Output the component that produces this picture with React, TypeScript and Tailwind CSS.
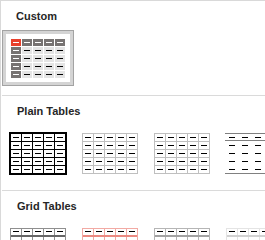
import React from "react";

const cols = [0, 1, 2, 3, 4];

function Dash({ light }: { light?: boolean }) {
  return <div className={light ? "w-[6px] h-px bg-white" : "w-[6px] h-px bg-black"} />;
}

function GridThumb({ line, thick }: { line: string; thick?: boolean }) {
  return (
    <div
      className={
        thick
          ? `flex flex-col gap-px p-[2px] w-[58px] h-[43px] ${line}`
          : `flex flex-col gap-px p-px w-[56px] h-[41px] ${line}`
      }
    >
      {cols.map((r) => (
        <div key={r} className="flex gap-px h-[7px]">
          {cols.map((c) => (
            <div key={c} className="flex-1 bg-white flex items-center justify-center">
              <Dash />
            </div>
          ))}
        </div>
      ))}
    </div>
  );
}

function HeadGridThumb({ line, head }: { line: string; head: string }) {
  return (
    <div className={`flex flex-col p-px w-[56px] h-[41px] ${line}`}>
      <div className="flex gap-px h-[7px]">
        {cols.map((c) => (
          <div key={c} className="flex-1 bg-white flex items-center justify-center">
            <Dash />
          </div>
        ))}
      </div>
      <div className={`h-[2px] ${head}`} />
      {[1, 2, 3, 4].map((r) => (
        <div key={r} className={r === 1 ? "flex gap-px h-[7px]" : "flex gap-px h-[7px] mt-px"}>
          {cols.map((c) => (
            <div key={c} className="flex-1 bg-white flex items-center justify-center">
              <Dash />
            </div>
          ))}
        </div>
      ))}
    </div>
  );
}

function LinesThumb() {
  return (
    <div className="flex flex-col w-[66px] h-[41px]">
      <div className="h-px bg-[#808080]" />
      <div className="flex h-[6px] items-center pt-[2px]">
        {cols.map((c) => (
          <div key={c} className="w-[13px] flex justify-center">
            <Dash />
          </div>
        ))}
      </div>
      <div className="h-px bg-[#808080]" />
      {[1, 2, 3, 4].map((r) => (
        <div key={r} className="flex h-[8px] items-center pt-[2px]">
          {cols.map((c) => (
            <div key={c} className="w-[13px] flex justify-center">
              <Dash />
            </div>
          ))}
        </div>
      ))}
      <div className="h-px bg-[#808080]" />
    </div>
  );
}

function CustomThumb() {
  return (
    <div className="flex flex-col gap-px w-[54px] h-[39px] bg-white">
      {cols.map((r) => (
        <div key={r} className="flex gap-px h-[7px]">
          {cols.map((c) => {
            const cls =
              r === 0 && c === 0
                ? "flex-1 bg-[#e8402c] flex items-center justify-center"
                : r === 0 || c === 0
                ? "flex-1 bg-[#777372] flex items-center justify-center"
                : "flex-1 bg-[#e4e4e4] flex items-center justify-center";
            return (
              <div key={c} className={cls}>
                <Dash light={r === 0 || c === 0} />
              </div>
            );
          })}
        </div>
      ))}
    </div>
  );
}

function Item({ children }: { children: React.ReactNode }) {
  return <div className="w-[72px] h-[56px] shrink-0 flex items-center justify-center">{children}</div>;
}

function Header({ children }: { children: React.ReactNode }) {
  return (
    <div
      className="pl-[15px] pt-[9px] h-[29px] text-[11px] leading-[13px] font-bold text-[#262626]"
      style={{ fontFamily: '"Liberation Sans", Arial, sans-serif' }}
    >
      {children}
    </div>
  );
}

export default function App() {
  return (
    <div className="w-[265px] h-[240px] overflow-hidden bg-white border-l border-t border-[#d9d9d9]">
      <div>
        <Header>Custom</Header>
        <div className="flex pl-px">
          <div className="w-[72px] h-[56px] shrink-0 border border-[#a3a3a3] bg-[#d4d4d4] p-[3px] flex">
            <div className="flex-1 bg-white flex items-center justify-center">
              <CustomThumb />
            </div>
          </div>
        </div>
        <div className="h-[9px]" />
      </div>
      <div className="border-t border-[#dadada] ml-px">
        <Header>Plain Tables</Header>
        <div className="flex">
          <Item>
            <GridThumb line="bg-black" thick />
          </Item>
          <Item>
            <GridThumb line="bg-[#bfbfbf]" />
          </Item>
          <Item>
            <GridThumb line="bg-[#bfbfbf]" />
          </Item>
          <div className="w-[72px] h-[56px] shrink-0 flex items-center pl-[7px]">
            <LinesThumb />
          </div>
        </div>
        <div className="h-[9px]" />
      </div>
      <div className="border-t border-[#dadada] ml-px">
        <Header>Grid Tables</Header>
        <div className="flex">
          <Item>
            <HeadGridThumb line="bg-[#8f8f8f]" head="bg-[#666666]" />
          </Item>
          <Item>
            <HeadGridThumb line="bg-[#f2aaa4]" head="bg-[#ec8a82]" />
          </Item>
          <Item>
            <HeadGridThumb line="bg-[#b5b5b5]" head="bg-[#a3a3a3]" />
          </Item>
          <Item>
            <HeadGridThumb line="bg-[#e4e4e4]" head="bg-[#d2d2d2]" />
          </Item>
        </div>
      </div>
    </div>
  );
}
